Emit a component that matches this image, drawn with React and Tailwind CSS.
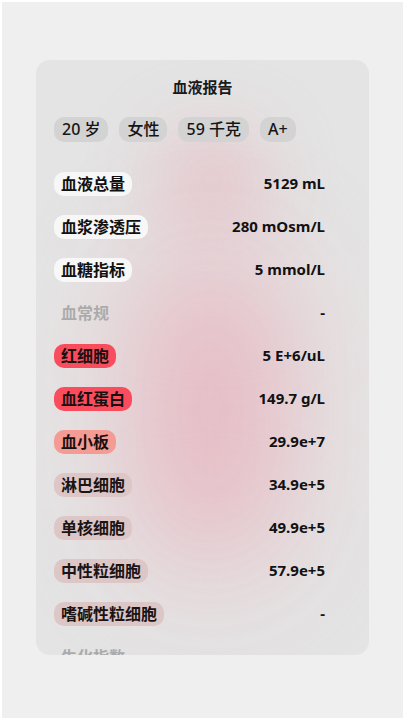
import React from "react";

const info = ["20 岁", "女性", "59 千克", "A+"];

const rows = [
  { label: "血液总量", value: "5129 mL", tone: "white" },
  { label: "血浆渗透压", value: "280 mOsm/L", tone: "white" },
  { label: "血糖指标", value: "5 mmol/L", tone: "white" },
  { label: "血常规", value: "-", tone: "head" },
  { label: "红细胞", value: "5 E+6/uL", tone: "red" },
  { label: "血红蛋白", value: "149.7 g/L", tone: "red" },
  { label: "血小板", value: "29.9e+7", tone: "salmon" },
  { label: "淋巴细胞", value: "34.9e+5", tone: "pink" },
  { label: "单核细胞", value: "49.9e+5", tone: "pink" },
  { label: "中性粒细胞", value: "57.9e+5", tone: "pink" },
  { label: "嗜碱性粒细胞", value: "-", tone: "pink" },
  { label: "生化指数", value: "", tone: "head" },
];

const toneClass = {
  white: "bg-[#f7f7f7] text-[#111]",
  red: "bg-[#f94c5c] text-[#1a1010]",
  salmon: "bg-[#f49b93] text-[#1a1010]",
  pink: "bg-[#dcc6c6] text-[#1a1414]",
  head: "text-[#ababab]",
};

export default function App() {
  return (
    <div
      className="h-[720px] w-[405px] bg-white p-[2px]"
      style={{ fontFamily: '"Noto Sans", "Noto Sans CJK SC", sans-serif' }}
    >
      <div className="h-full w-full bg-[#efefef] pt-[58px] pl-[34px]">
        <div className="relative h-[595px] w-[333px] overflow-hidden rounded-[14px] bg-[#e4e4e4]">
          {/* blurred pink glow */}
          <div className="absolute left-[128px] top-[78px] h-[85px] w-[95px] rounded-full bg-[#e8b2bc] opacity-80 blur-2xl" />
          <div className="absolute left-[112px] top-[195px] h-[310px] w-[125px] rounded-full bg-[#e8aab6] opacity-90 blur-3xl" />

          <div className="relative pt-[16px] pl-[18px] pr-[44px]">
            <div className="text-center text-[15px] font-bold text-[#1a1a1a] pl-[26px]">血液报告</div>

            <div className="mt-[18px] flex gap-[11px]">
              {info.map((t) => (
                <span
                  key={t}
                  className="flex h-[25px] items-center rounded-[10px] bg-[#d3d3d3] px-[8px] text-[16px] font-medium text-[#151515]"
                >
                  {t}
                </span>
              ))}
            </div>

            <div className="mt-[30px] flex flex-col gap-[19px]">
              {rows.map((r) => (
                <div key={r.label} className="flex h-[24px] items-center justify-between">
                  <span
                    className={`flex h-[24px] items-center rounded-[10px] px-[7px] text-[16px] font-semibold ${toneClass[r.tone]}`}
                  >
                    {r.label}
                  </span>
                  <span className="text-[15px] font-bold text-[#111]">{r.value}</span>
                </div>
              ))}
            </div>
          </div>
        </div>
      </div>
    </div>
  );
}
